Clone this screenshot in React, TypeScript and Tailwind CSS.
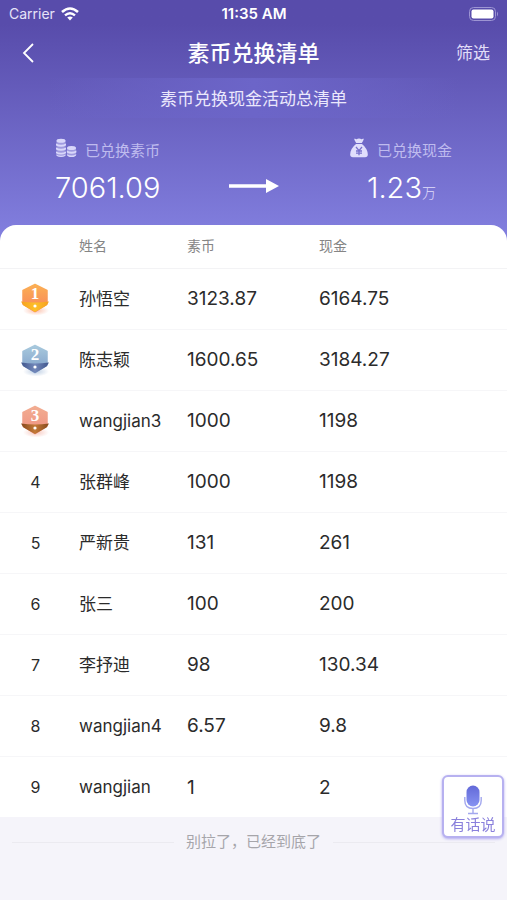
import { useId } from "react";

type Row = {
  rank: number;
  name: string;
  coins: string;
  cash: string;
};

const rows: Row[] = [
  { rank: 1, name: "孙悟空", coins: "3123.87", cash: "6164.75" },
  { rank: 2, name: "陈志颖", coins: "1600.65", cash: "3184.27" },
  { rank: 3, name: "wangjian3", coins: "1000", cash: "1198" },
  { rank: 4, name: "张群峰", coins: "1000", cash: "1198" },
  { rank: 5, name: "严新贵", coins: "131", cash: "261" },
  { rank: 6, name: "张三", coins: "100", cash: "200" },
  { rank: 7, name: "李抒迪", coins: "98", cash: "130.34" },
  { rank: 8, name: "wangjian4", coins: "6.57", cash: "9.8" },
  { rank: 9, name: "wangjian", coins: "1", cash: "2" },
];

// top, bottom, ribbon, ribbon ends
const medals = [
  ["#fbb054", "#f8845c", "#fdc02a", "#f6a01e"],
  ["#a8c9dd", "#7f9fc9", "#7388ba", "#40568c"],
  ["#f2ad92", "#ef9180", "#c47a38", "#84481c"],
];

function Medal({ rank }: { rank: number }) {
  const id = useId();
  const [top, bottom, ribbon, ends] = medals[rank - 1];

  return (
    <svg
      viewBox="0 0 32 36"
      className="mx-auto h-9 w-8"
      role="img"
      aria-label={`第${rank}名`}
    >
      <defs>
        <linearGradient id={`${id}b`} x1="0" y1="0" x2="0" y2="1">
          <stop offset="0" stopColor={top} />
          <stop offset="1" stopColor={bottom} />
        </linearGradient>
        <linearGradient id={`${id}r`}>
          <stop offset="0" stopColor={ends} />
          <stop offset="0.5" stopColor={ribbon} />
          <stop offset="1" stopColor={ends} />
        </linearGradient>
        <radialGradient id={`${id}s`}>
          <stop offset="0" stopColor={bottom} stopOpacity="0.5" />
          <stop offset="1" stopColor={bottom} stopOpacity="0" />
        </radialGradient>
      </defs>
      <ellipse cx="16" cy="29.5" rx="13" ry="5" fill={`url(#${id}s)`} />
      <path
        d="M15 3.5 27 9.5V23L15 30.5 3 23V9.5Z"
        fill={`url(#${id}b)`}
        stroke={`url(#${id}b)`}
        strokeWidth="1.5"
        strokeLinejoin="round"
      />
      <path
        d="M1 20.5Q15 22.500 29 20.500L26.500 24.500 15 31 3.500 24.500Z"
        fill={`url(#${id}r)`}
      />
      <circle cx="15" cy="25" r="1.6" fill="#fff" />
      <text
        x="15"
        y="18"
        textAnchor="middle"
        fill="#fff"
        fontSize="17"
        fontWeight="700"
        fontFamily="Liberation Serif, serif"
      >
        {rank}
      </text>
    </svg>
  );
}

function StatusBar() {
  return (
    <div className="grid h-7 grid-cols-3 items-center pr-2 pl-[9px] text-sm">
      <div className="flex items-center gap-1.5 text-[#e6e3f8]">
        <span>Carrier</span>
        <svg viewBox="0 0 18 14" className="h-3.5 w-[18px]" fill="none">
          <path d="M1 5q8-7 16 0" stroke="#fff" strokeWidth="2.6" />
          <path d="M4 8.4q5-4.4 10 0" stroke="#fff" strokeWidth="2.4" />
          <path d="M6.2 10.6q2.8-2.2 5.6 0L9 13.6Z" fill="#fff" />
        </svg>
      </div>
      <span className="text-center text-[15px] font-semibold">11:35 AM</span>
      <svg viewBox="0 0 30 14" className="h-3.5 w-[30px] justify-self-end">
        <rect
          x="0.5"
          y="0.5"
          width="26"
          height="13"
          rx="4"
          fill="none"
          stroke="#9d95d3"
        />
        <rect x="2.5" y="2.5" width="22" height="9" rx="2" fill="#fff" />
        <path d="M28 4.5q2 2.5 0 5Z" fill="#9d95d3" />
      </svg>
    </div>
  );
}

function CoinsIcon() {
  return (
    <svg viewBox="0 0 22 20" className="h-5 w-[22px]" fill="#d9d7fa">
      <rect x="1.5" y="1" width="9" height="17.5" rx="2.5" opacity="0.45" />
      <rect x="12" y="8.5" width="9" height="10" rx="2.5" opacity="0.45" />
      <ellipse cx="6" cy="2.8" rx="4.5" ry="2" />
      <path d="M1 5.4q5 2.6 10 0v2q-5 2.8-10 0ZM1 9.4q5 2.6 10 0v2q-5 2.8-10 0ZM1 13.4q5 2.6 10 0v1.8q-5 2.8-10 0ZM1 16.6q5 2.4 10 0-.4 2.4-5 2.4t-5-2.4Z" />
      <ellipse cx="16.5" cy="10" rx="4.5" ry="2" />
      <path d="M11.8 12.4q4.8 2.6 9.6 0v2q-4.8 2.8-9.6 0ZM11.8 16.2q4.8 2.4 9.6 0-.4 2.8-4.8 2.8t-4.8-2.8Z" />
    </svg>
  );
}

function MoneyBagIcon() {
  return (
    <svg viewBox="0 0 20 20" className="h-5 w-5">
      <path
        d="M5.6.6q2.2 1 3 .2 1.4-.8 2.8 0 .8.8 3-.2.8.8-.4 2.4L12.8 5H7.2L6 3Q4.8 1.4 5.6.6Z"
        fill="#e0defc"
      />
      <path
        d="M7 6h6q5.6 4.5 5.8 10.5 0 2.7-2.8 2.7H4q-2.8 0-2.8-2.7Q1.4 10.5 7 6Z"
        fill="#e0defc"
      />
      <path
        d="m7 9 3 3.6L13 9M10 12.6V17.2M7 13h6M7 15.2h6"
        fill="none"
        stroke="#7770cc"
        strokeWidth="1.3"
      />
    </svg>
  );
}

function MicIcon() {
  return (
    <svg viewBox="0 0 20 30" className="h-[30px] w-5" fill="none">
      <defs>
        <linearGradient id="mic" x1="0" y1="0" x2="0" y2="1">
          <stop offset="0" stopColor="#6269d8" />
          <stop offset="1" stopColor="#8793f2" />
        </linearGradient>
      </defs>
      <rect x="3.5" y="0.5" width="13" height="21" rx="6.5" fill="url(#mic)" />
      <path
        d="M1.8 12v3.5q0 8 8.2 8t8.2-8V12M10 23.5v5M5 28.5h10"
        stroke="#a3a8ee"
        strokeWidth="1.4"
      />
    </svg>
  );
}

export default function App() {
  return (
    <main className="min-h-screen bg-[#f5f4fa] font-[Inter,'Noto_Sans_CJK_SC',sans-serif] text-[#2b2b2b]">
      <header className="bg-linear-to-b from-[#584cab] from-10% to-[#8380e0] pb-4 text-white">
        <StatusBar />

        <nav className="grid h-[50px] grid-cols-[1fr_auto_1fr] items-center px-[17px]">
          <button type="button" aria-label="返回" className="w-6 pl-1">
            <svg viewBox="0 0 14 22" className="h-[22px] w-3.5" fill="none">
              <path d="M12 2 3 11l9 9" stroke="#fff" strokeWidth="1.8" />
            </svg>
          </button>
          <h1 className="text-[22px] font-medium">素币兑换清单</h1>
          <button
            type="button"
            className="justify-self-end pt-0.5 text-[17px] text-[#e1ddf8]"
          >
            筛选
          </button>
        </nav>

        <p className="mx-12 flex h-10 items-center justify-center bg-linear-to-r from-transparent via-[#6c65c8] to-transparent pt-1 text-[17px] text-[#ebe8fc]">
          素币兑换现金活动总清单
        </p>

        {/* 汇总 */}
        <section className="flex h-[107px] justify-between px-[55px] pt-[18px]">
          <div className="flex-1">
            <div className="flex h-6 items-center gap-2 text-[15px] text-[#bfbbee]">
              <CoinsIcon />
              <span className="pt-1.5">已兑换素币</span>
            </div>
            <div className="mt-2.5 text-[29px] leading-9 font-light">
              7061.09
            </div>
          </div>
          <svg viewBox="0 0 50 16" className="mt-[42px] h-4 w-[50px]" fill="#fff">
            <path d="M0 6.2h37V1l13 7-13 7V9.8H0Z" />
          </svg>
          <div className="flex flex-1 flex-col items-end">
            <div className="flex h-6 items-center gap-2 text-[15px] text-[#bfbbee]">
              <MoneyBagIcon />
              <span className="pt-1.5">已兑换现金</span>
            </div>
            <div className="mt-2.5 pr-4 text-[29px] leading-9 font-light">
              1.23<span className="text-sm text-[#e1defb]">万</span>
            </div>
          </div>
        </section>
      </header>

      {/* 排行 */}
      <section className="relative -mt-4 overflow-hidden rounded-t-2xl bg-white">
        <table className="w-full table-fixed text-left">
          <thead>
            <tr className="h-[43px] border-b border-[#f3f3f5] text-sm text-[#858585]">
              <th className="w-[79px]" aria-label="排名" />
              <th className="w-[108px] font-normal">姓名</th>
              <th className="w-[132px] font-normal">素币</th>
              <th className="font-normal">现金</th>
            </tr>
          </thead>
          <tbody>
            {rows.map((row) => (
              <tr
                key={row.rank}
                className="h-[61px] border-b border-[#f6f6f8] last:border-0"
              >
                <td className="pr-2 text-center text-base">
                  {row.rank <= 3 ? <Medal rank={row.rank} /> : row.rank}
                </td>
                <td className="pt-0.5 text-[17px]">{row.name}</td>
                <td className="pt-0.5 text-[19px]">{row.coins}</td>
                <td className="pt-0.5 text-[19px]">{row.cash}</td>
              </tr>
            ))}
          </tbody>
        </table>
      </section>

      <footer className="flex items-center gap-3 px-3 py-3.5 text-[15px] text-[#a6a5aa]">
        <span className="h-px flex-1 bg-[#ebeaf0]" />
        别拉了，已经到底了
        <span className="h-px flex-1 bg-[#ebeaf0]" />
      </footer>

      <button
        type="button"
        className="fixed right-[3px] bottom-[62px] flex h-[63px] w-[62px] flex-col items-center justify-end rounded-md border-2 border-[#b7b1f0] bg-white pb-px text-[15px] leading-5 text-[#8a80dc] shadow-sm shadow-[#b7b1f0]"
      >
        <MicIcon />
        有话说
      </button>
    </main>
  );
}
